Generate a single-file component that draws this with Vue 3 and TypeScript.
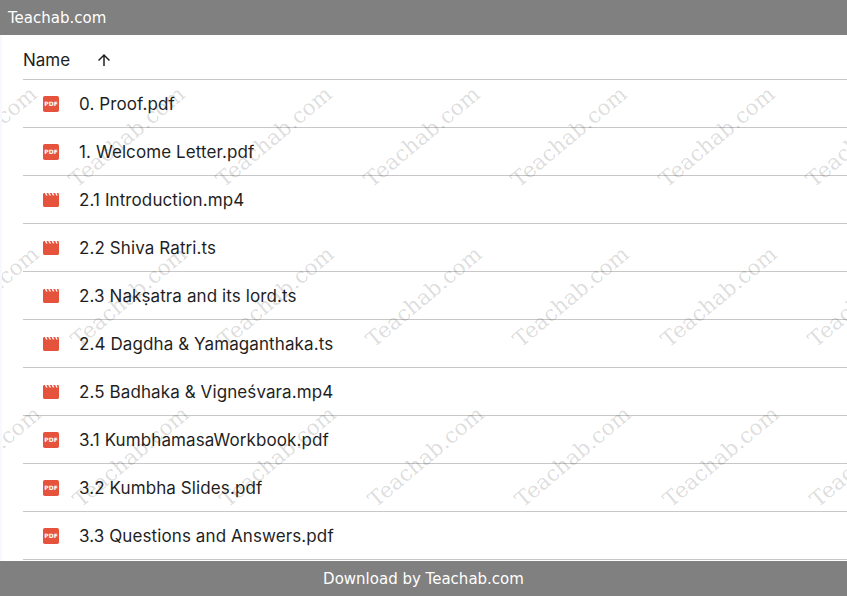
<script setup lang="ts">
interface FileRow {
  name: string
  kind: 'pdf' | 'video'
}

const files: FileRow[] = [
  { name: '0. Proof.pdf', kind: 'pdf' },
  { name: '1. Welcome Letter.pdf', kind: 'pdf' },
  { name: '2.1 Introduction.mp4', kind: 'video' },
  { name: '2.2 Shiva Ratri.ts', kind: 'video' },
  { name: '2.3 Nakṣatra and its lord.ts', kind: 'video' },
  { name: '2.4 Dagdha & Yamaganthaka.ts', kind: 'video' },
  { name: '2.5 Badhaka & Vigneśvara.mp4', kind: 'video' },
  { name: '3.1 KumbhamasaWorkbook.pdf', kind: 'pdf' },
  { name: '3.2 Kumbha Slides.pdf', kind: 'pdf' },
  { name: '3.3 Questions and Answers.pdf', kind: 'pdf' }
]

// watermark tiles, each row drifts a little to the right
const marks: { x: number; y: number }[] = []
for (let r = 0; r < 3; r++) {
  for (let c = 0; c < 7; c++) {
    marks.push({ x: -70 + c * 147.5 + r * 2, y: 132 + r * 160 })
  }
}
</script>

<template>
  <div class="page">
    <header class="top-bar">Teachab.com</header>

    <main class="listing">
      <div class="head-row">
        <span class="head-name">Name</span>
        <svg class="sort-arrow" viewBox="0 0 24 24" width="18" height="18">
          <path d="M4 12l1.41 1.41L11 7.83V20h2V7.83l5.58 5.59L20 12l-8-8-8 8z" fill="#1f1f1f" />
        </svg>
      </div>

      <div v-for="file in files" :key="file.name" class="file-row">
        <svg v-if="file.kind === 'pdf'" class="file-icon" viewBox="0 0 16 16" width="16" height="16">
          <rect x="0" y="0" width="16" height="16" rx="1.8" fill="#e5533d" />
          <text x="8" y="10.3" text-anchor="middle" class="pdf-label">PDF</text>
        </svg>
        <svg v-else class="file-icon" viewBox="0 0 16 16" width="16" height="16">
          <path
            d="M0 2.4A1.4 1.4 0 0 1 1.4 1h.5l1.2 2.6h1.5L3.4 1h1.9l1.2 2.6h1.5L6.8 1h1.9l1.2 2.6h1.5L10.2 1h1.9l1.2 2.6h1.5L13.6 1h1A1.4 1.4 0 0 1 16 2.4v11.2a1.4 1.4 0 0 1-1.4 1.4H1.4A1.4 1.4 0 0 1 0 13.6z"
            fill="#e5533d"
          />
        </svg>
        <span class="file-name">{{ file.name }}</span>
      </div>

      <div class="marks">
        <span
          v-for="(m, i) in marks"
          :key="i"
          class="mark"
          :style="{ left: m.x + 'px', top: m.y + 'px' }"
        >Teachab.com</span>
      </div>
    </main>

    <footer class="bottom-bar">Download by Teachab.com</footer>
  </div>
</template>

<style>
html,
body {
  margin: 0;
  background: #fff;
  overflow: hidden;
}
</style>

<style scoped>
.page {
  width: 847px;
  height: 596px;
  display: flex;
  flex-direction: column;
  overflow: hidden;
  background: #fff;
  color: #1f1f1f;
  font-family: Inter, "Noto Sans", sans-serif;
}

.top-bar {
  height: 35px;
  flex: none;
  display: flex;
  align-items: center;
  padding-left: 8px;
  background: #808080;
  color: #fff;
  font: 15px "DejaVu Sans", sans-serif;
}

.bottom-bar {
  height: 35px;
  flex: none;
  display: flex;
  align-items: center;
  justify-content: center;
  background: #808080;
  color: #fff;
  font: 15px "DejaVu Sans", sans-serif;
}

.listing {
  flex: 1;
  min-height: 0;
  position: relative;
  overflow: hidden;
  padding-left: 23px;
  border-left: 2px solid #f8f8ff;
}

.head-row {
  height: 45px;
  box-sizing: border-box;
  display: flex;
  align-items: center;
  margin-left: -2px;
  padding-top: 5px;
  border-bottom: 1px solid #c7c7c7;
  font-size: 17px;
}

.head-name {
  width: 72px;
  box-sizing: border-box;
}

.sort-arrow {
  display: block;
}

.file-row {
  height: 48px;
  box-sizing: border-box;
  display: flex;
  align-items: center;
  margin-left: -2px;
  padding-left: 20px;
  border-bottom: 1px solid #c7c7c7;
}

.file-icon {
  flex: none;
  display: block;
  margin-right: 20px;
}

.pdf-label {
  font: 700 6px "DejaVu Sans", sans-serif;
  fill: #fff;
}

.file-name {
  font-size: 17px;
  letter-spacing: 0.1px;
  white-space: nowrap;
}

.marks {
  position: absolute;
  inset: 0;
  pointer-events: none;
}

.mark {
  position: absolute;
  font: 21.5px "DejaVu Serif", serif;
  color: rgba(0, 0, 0, 0.15);
  white-space: nowrap;
  transform: rotate(-40deg);
  transform-origin: left bottom;
}
</style>
